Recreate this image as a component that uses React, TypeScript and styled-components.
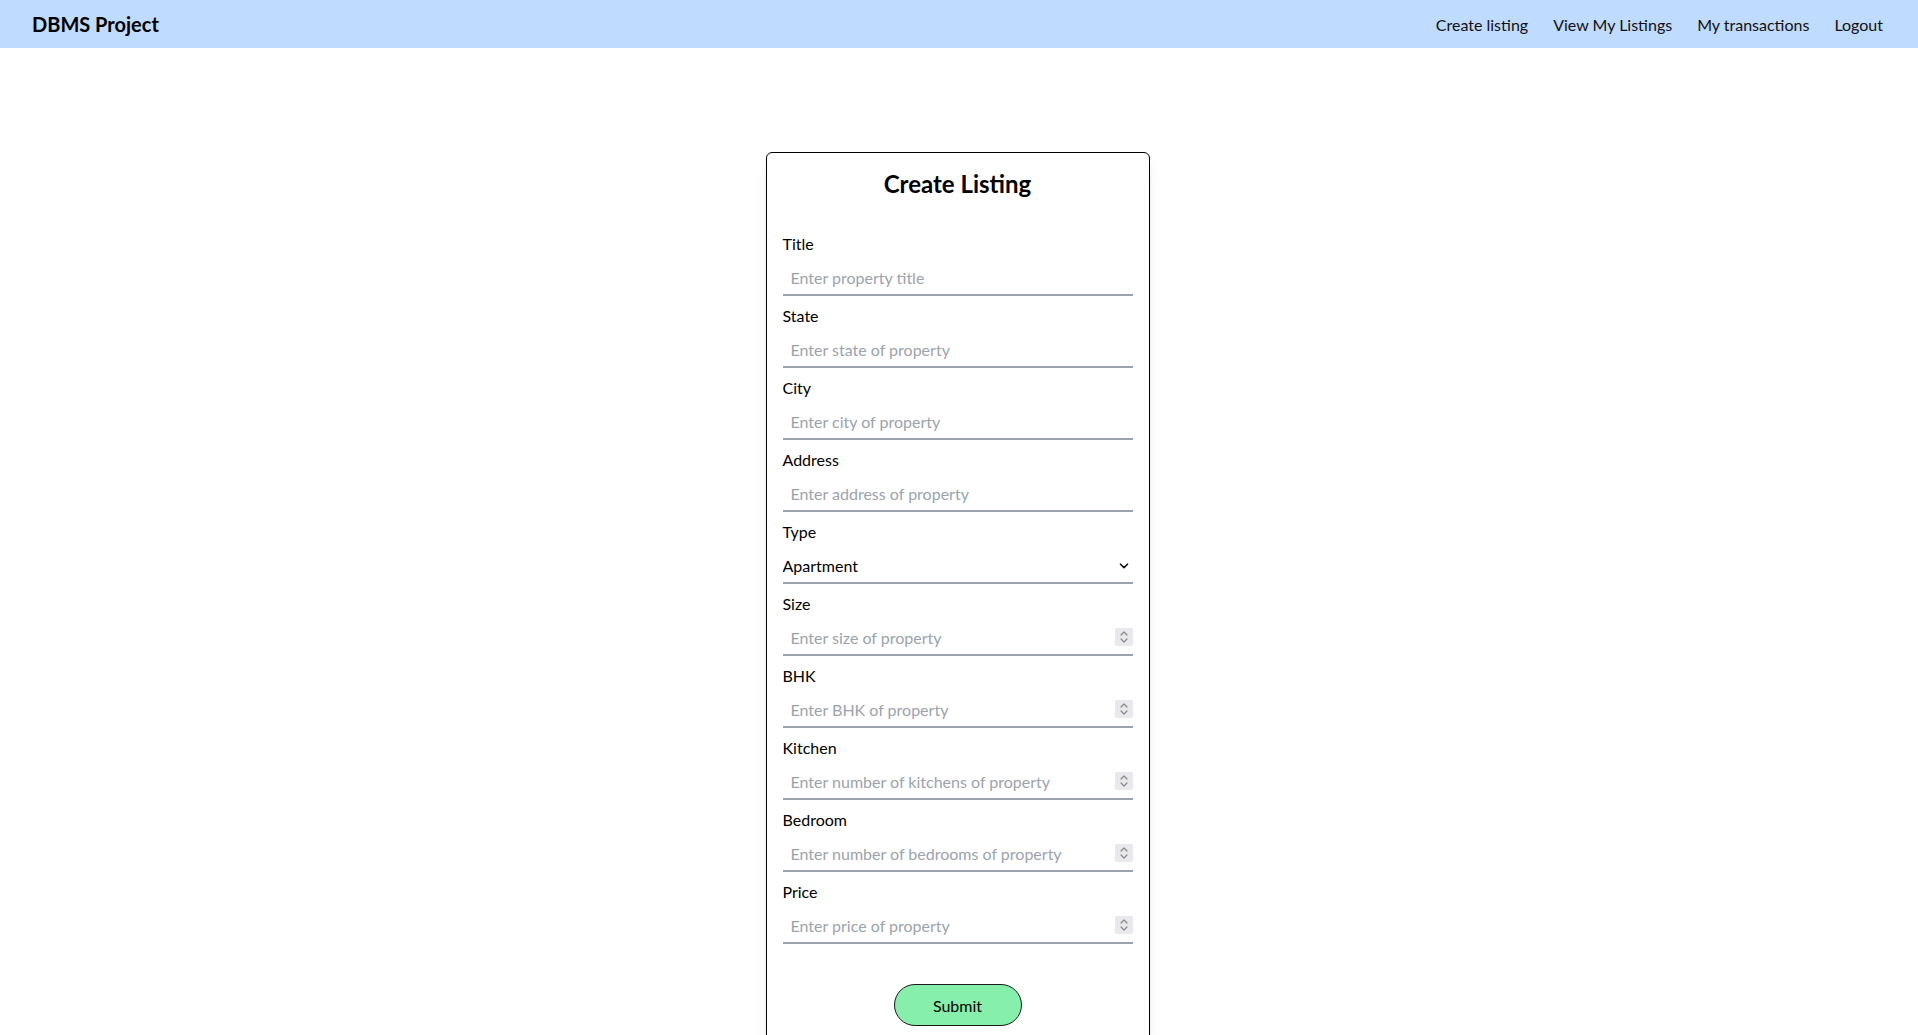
import React from "react";
import styled, { createGlobalStyle } from "styled-components";

const GlobalStyle = createGlobalStyle`
  html, body {
    margin: 0;
    padding: 0;
    background: #ffffff;
    font-family: Lato, "Noto Sans", "Liberation Sans", sans-serif;
    color: #111111;
  }
  *, *::before, *::after { box-sizing: border-box; }
  ::-webkit-scrollbar { width: 6px; }
  ::-webkit-scrollbar-track {
    background: linear-gradient(to right, #ffffff 0 3px, #2f93e6 3px);
  }
  ::-webkit-scrollbar-thumb {
    background: linear-gradient(to right, #c9c9c9 0 3px, #2f93e6 3px);
  }
`;

const NavBar = styled.nav`
  height: 48px;
  background: #bfdbfe;
  display: flex;
  align-items: center;
  justify-content: space-between;
  padding: 0 35px 0 32px;
`;

const Brand = styled.div`
  font-size: 20px;
  font-weight: 700;
  color: #000;
`;

const NavLinks = styled.div`
  display: flex;
  gap: 25px;
`;

const NavLink = styled.a`
  font-size: 16px;
  color: #111;
  text-decoration: none;
  cursor: pointer;
`;

const Main = styled.main`
  display: flex;
  justify-content: center;
  padding: 104px 3px 0 0;
`;

const Card = styled.form`
  width: 384px;
  border: 1px solid #000;
  border-radius: 6px;
  padding: 15px 16px 16px;
  background: #fff;
  box-shadow: 0 10px 15px -3px rgba(0, 0, 0, 0.1), 0 4px 6px -4px rgba(0, 0, 0, 0.1);
`;

const Heading = styled.h1`
  margin: 0 0 32px;
  font-size: 24px;
  line-height: 32px;
  font-weight: 700;
  text-align: center;
  color: #000;
`;

const Field = styled.div`
  display: flex;
  flex-direction: column;
  gap: 4px;
  margin-bottom: 8px;
`;

const Label = styled.label`
  font-size: 16px;
  line-height: 24px;
  color: #000;
`;

const InputBox = styled.div`
  display: flex;
  align-items: center;
  height: 36px;
  border-bottom: 2px solid #9ca3af;
`;

const Input = styled.input`
  flex: 1;
  min-width: 0;
  border: none;
  outline: none;
  background: transparent;
  padding: 0 8px;
  font-family: inherit;
  font-size: 16px;
  color: #000;
  &::placeholder { color: #9ca3af; }
`;

const Select = styled.select`
  flex: 1;
  appearance: none;
  border: none;
  outline: none;
  background: transparent;
  padding: 0;
  font-family: inherit;
  font-size: 16px;
  color: #000;
`;

const Spinner = styled.div`
  width: 18px;
  height: 18px;
  border-radius: 2px;
  background: #e9e9ed;
  display: flex;
  align-items: center;
  justify-content: center;
`;

const ChevronWrap = styled.div`
  width: 18px;
  display: flex;
  justify-content: center;
  padding-top: 2px;
`;

const ButtonRow = styled.div`
  display: flex;
  justify-content: center;
  margin-top: 40px;
`;

const SubmitButton = styled.button`
  width: 128px;
  height: 42px;
  border: 1px solid #1a1a1a;
  border-radius: 9999px;
  background: #86efac;
  font-family: inherit;
  font-size: 16px;
  color: #000;
  cursor: pointer;
`;

const SpinIcon = () => (
  <Spinner>
    <svg width="10" height="14" viewBox="0 0 10 14" fill="none" stroke="#8b8b8f" strokeWidth="1.3" strokeLinecap="round" strokeLinejoin="round">
      <path d="M2 5 L5 2 L8 5" />
      <path d="M2 9 L5 12 L8 9" />
    </svg>
  </Spinner>
);

type FieldDef = { label: string; placeholder: string; numeric?: boolean };

const textFields: FieldDef[] = [
  { label: "Title", placeholder: "Enter property title" },
  { label: "State", placeholder: "Enter state of property" },
  { label: "City", placeholder: "Enter city of property" },
  { label: "Address", placeholder: "Enter address of property" },
];

const numberFields: FieldDef[] = [
  { label: "Size", placeholder: "Enter size of property", numeric: true },
  { label: "BHK", placeholder: "Enter BHK of property", numeric: true },
  { label: "Kitchen", placeholder: "Enter number of kitchens of property", numeric: true },
  { label: "Bedroom", placeholder: "Enter number of bedrooms of property", numeric: true },
  { label: "Price", placeholder: "Enter price of property", numeric: true },
];

const FieldRow = ({ label, placeholder, numeric }: FieldDef) => (
  <Field>
    <Label>{label}</Label>
    <InputBox>
      <Input type="text" inputMode={numeric ? "numeric" : "text"} placeholder={placeholder} />
      {numeric && <SpinIcon />}
    </InputBox>
  </Field>
);

export default function App() {
  return (
    <>
      <GlobalStyle />
      <NavBar>
        <Brand>DBMS Project</Brand>
        <NavLinks>
          <NavLink>Create listing</NavLink>
          <NavLink>View My Listings</NavLink>
          <NavLink>My transactions</NavLink>
          <NavLink>Logout</NavLink>
        </NavLinks>
      </NavBar>
      <Main>
        <Card onSubmit={(e) => e.preventDefault()}>
          <Heading>Create Listing</Heading>
          {textFields.map((f) => (
            <FieldRow key={f.label} {...f} />
          ))}
          <Field>
            <Label>Type</Label>
            <InputBox>
              <Select defaultValue="Apartment">
                <option>Apartment</option>
                <option>Independent House</option>
                <option>Villa</option>
              </Select>
              <ChevronWrap>
                <svg width="10" height="6" viewBox="0 0 10 6" fill="none" stroke="#111" strokeWidth="1.6" strokeLinecap="round" strokeLinejoin="round">
                  <path d="M1.5 1.2 L5 4.6 L8.5 1.2" />
                </svg>
              </ChevronWrap>
            </InputBox>
          </Field>
          {numberFields.map((f) => (
            <FieldRow key={f.label} {...f} />
          ))}
          <ButtonRow>
            <SubmitButton type="submit">Submit</SubmitButton>
          </ButtonRow>
        </Card>
      </Main>
    </>
  );
}
